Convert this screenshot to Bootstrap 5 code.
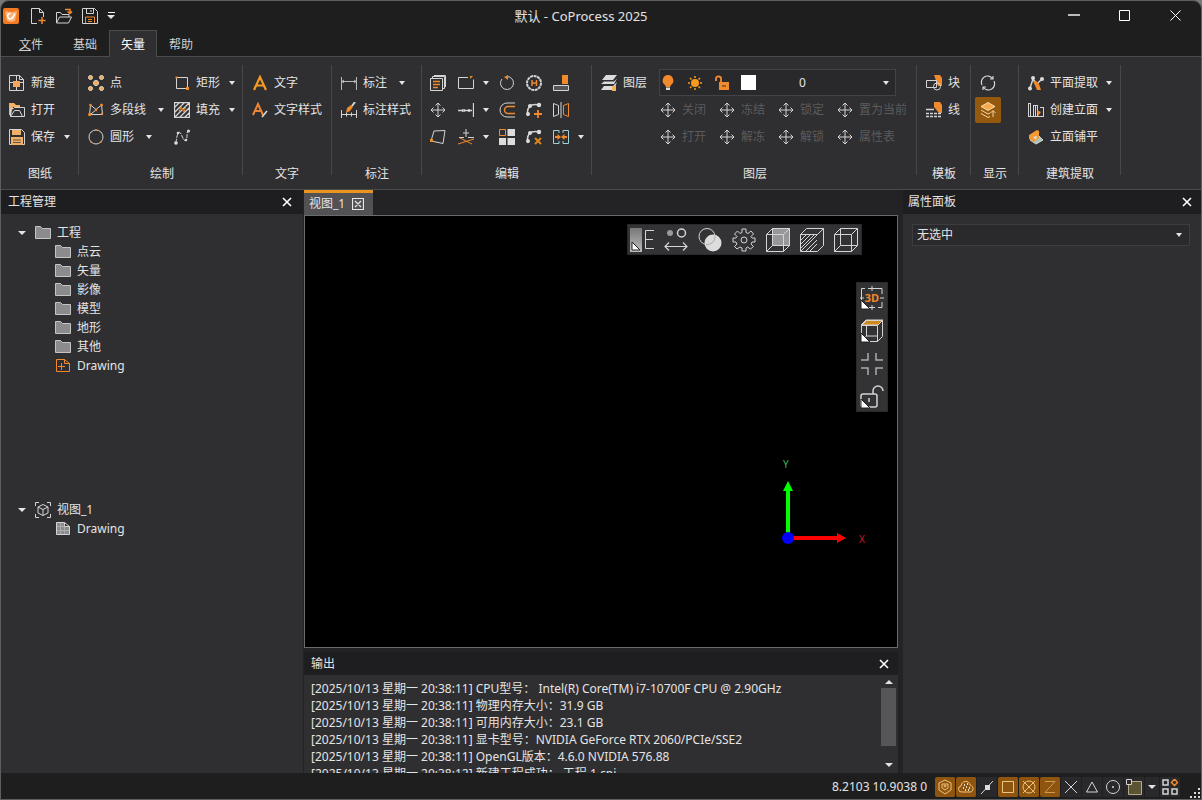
<!DOCTYPE html>
<html lang="zh-CN">
<head>
<meta charset="utf-8">
<meta name="viewport" content="width=device-width, initial-scale=1">
<title>默认 - CoProcess 2025</title>
<link rel="stylesheet" href="https://cdn.jsdelivr.net/npm/bootstrap@5.3.0/dist/css/bootstrap.min.css">
<style>
:root{--shell:#1e1e1e;--panel:#2f2e30;--head:#1e1d1f;--line:#4b4b4d;--ink:#e4e4e4;--orange:#f08a2c}
body{font-family:"Noto Sans","Noto Sans CJK SC",sans-serif;font-size:12px;line-height:18px;color:var(--ink);background:#77787a}
button,select{font:inherit;color:inherit;background:none;border:0;padding:0}
svg{display:block;flex:none;fill:none;stroke:#d4d4d4;stroke-width:1}
.o{stroke:var(--orange)} .of{fill:var(--orange);stroke:none} .wf{fill:#dcdcdc;stroke:none}
.i16{width:16px;height:16px}.i18{width:18px;height:18px}
.shell{border:1px solid #5d5e60;border-radius:9px 9px 0 0;background:var(--shell)}
.titlebar{height:29px}
.win-title{left:0;right:0;top:6px;padding-right:40px;font-size:13px;pointer-events:none}
.win-ctl button{width:51px;height:29px}
.quick{gap:8px;padding-left:2px}
.quick .logo{margin-right:2px}
.quick-menu{gap:2px}
.quick-menu span:first-child{width:7px}
.menubar{height:27px;padding-left:6px;border-bottom:1px solid var(--line)}
.menu-tab{height:27px;color:#cfcfcf;text-decoration:none;line-height:27px;width:48px;text-align:center;border:1px solid transparent;border-bottom:0}
.menu-tab.on{background:var(--panel);border-color:var(--line);color:#fff}
.menu-tab.file{margin-right:6px}
.ribbon{background:var(--panel);height:133px;border-bottom:1px solid var(--line);overflow:hidden}
.group{flex:none;padding:12px 9px 0 9px;background:linear-gradient(#47474a,#47474a) right 8px/1px 110px no-repeat}
.cells{display:grid;grid-auto-rows:27px;height:81px;justify-content:start}
.group h2{font-size:12px;line-height:18px;margin:15px 0 0;text-align:center;font-weight:400;white-space:nowrap}
.cell{display:flex;align-items:center;white-space:nowrap}
.tool{display:flex;align-items:center;gap:6px}
.drop{width:14px;height:18px;margin-left:8px;display:flex;align-items:center;justify-content:center}
.drop::before,.tri{content:"";border:4px solid transparent;border-top-color:#e4e4e4;border-bottom:0;width:0;height:0}
.drop::before{border-width:4px 3px 0}
.tri.up{border:4px solid transparent;border-bottom-color:#e4e4e4;border-top:0}
.g-file{padding-left:8px;padding-right:8px}
.g-draw{padding-right:7px}
.c-file{grid-template-columns:62px}
.c-draw{grid-template-columns:86px 62px}
.g-text{padding-right:10px}
.c-text{grid-template-columns:70px}
.c-dim{grid-template-columns:72px}
.c-edit{grid-template-columns:28px 41px 27px 27px 39px}
.c-edit .drop{margin-left:5px}
.g-edit{padding:12px 0 0 8px}
.g-edit h2{padding-right:8px}
.c-layer{grid-template-columns:59px 59px 59px 59px 72px}
.c-layer .tool:disabled{color:#5b5b5d}
.g-layer{padding-right:8px}
.c-tpl{grid-template-columns:36px}
.c-show{grid-template-columns:30px}
.c-arch{grid-template-columns:84px}
.g-tpl{min-width:54px}
.combo{grid-column:2/6;margin:0 13px 0 -1px;border:1px solid #434345;background:#29282a;display:flex;align-items:center;padding:0 6px 0 0}
.combo button{width:27px;height:25px;display:flex;align-items:center}
.combo select{flex:1;padding-left:43px;height:25px}
.swatch{width:15px;height:15px;background:#fff}
select{appearance:none;background:url("data:image/svg+xml,%3Csvg xmlns='http://www.w3.org/2000/svg' width='6' height='4'%3E%3Cpath d='M0 0h6L3 4z' fill='%23e4e4e4'/%3E%3C/svg%3E") right 0 center no-repeat}
.lit{width:26px;height:26px;background:#93590f;border-radius:2px;display:flex;align-items:center;justify-content:center;margin-left:-5px;flex:none}
.dock-l{width:302px}.dock-r{width:298px}
.dock-l,.dock-r,.out-body{background:var(--panel)}
.dock-head{height:24px;background:var(--head);padding:0 10px 0 7px;display:flex;align-items:center;justify-content:space-between;flex:none}
.dock-head h2{font-size:12px;line-height:18px;font-weight:400;margin:0}
.dock-l .dock-head{padding-right:11px}
.dock-r .dock-head{padding:0 9px 0 5px}
.tree{display:grid;grid-template-rows:1fr 1fr}
.tree>ul{list-style:none;margin:0;padding:9px 0 0 17px}
.tree>ul+ul{padding-top:7px}
.tree ul ul{list-style:none;margin:0;padding:0 0 0 37px}
.node{height:19px;display:flex;align-items:center;gap:6px}
.node .tri{margin-right:3px;flex:none}
.center{background:#232224;padding:0 5px 0 1px}
.center .dock-head{padding-right:9px;height:23px}
.doc-tab{background:#525154;border-top:3px solid #e8951f;height:25px;padding:0 9px 0 5px;gap:7px;white-space:nowrap}
.view{background:#000;border:1px solid #6a696c}
.vtools{background:#333234;border:1px solid #29282a}
.vt-h{top:8px;right:35px;height:31px;padding:0 3px 0 2px;gap:10px}
.vt-v{top:66px;right:9px;width:32px;height:130px;gap:9px}
.vtools svg{width:24px;height:24px}
.axes{right:30px;bottom:89px;width:90px;height:100px}
.output{height:121px;margin-top:4px}
.log{overflow:hidden;line-height:17px;padding:5px 0 0 7px;white-space:pre}
.sbar{width:15px;margin:5px 2px 6px 0}
.thumb{width:15px;height:58px;background:#565557;margin-bottom:14px}
.prop{margin:10px 11px 0 9px;height:22px;border:1px solid #3d3c3f;background-color:#2a292b;padding:0 4px;background-position:right 7px center}
.status{height:26px;padding-top:2px}
.status .sb{width:21px;height:20px;display:flex;align-items:center;justify-content:center;border-right:1px solid var(--shell);background:#29282a}
.status .sb.on{background:#8d5510;border-radius:2px}
.status .sb.on svg{stroke:#f1c27c}
.status .caret{width:15px}
.status .grip{margin-left:8px}
</style>
</head>
<body>
<svg width="0" height="0" class="position-absolute">
<symbol id="move" viewBox="0 0 16 16"><path d="M8 1v14M1 8h14M5.500 3.500 8 1l2.500 2.500M5.500 12.500 8 15l2.500-2.500M3.500 5.500 1 8l2.500 2.500M12.500 5.500 15 8l-2.500 2.500"/></symbol>
<symbol id="folder" viewBox="0 0 16 16"><path d="M.5 13.500v-12h5l2 2h8v10z" fill="#8b8a8c" stroke="#c4c4c4"/></symbol>
<symbol id="close" viewBox="0 0 10 10"><path d="m1 1 8 8M9 1 1 9" stroke="#fff" stroke-width="1.600"/></symbol>
<symbol id="cube" viewBox="0 0 24 24"><path d="M.5 6.500h17v17H.5zM.5 6.500l6-6h17v17l-6 6M17.500 6.500l6-6M6.500.5v17h17M.5 23.500l6-6"/></symbol>
<symbol id="corner" viewBox="0 0 24 24"><path d="M1 14v9h9z" fill="#fff" stroke="#222"/></symbol>
</svg>
<div class="shell vh-100 d-flex flex-column overflow-hidden">
<header>
<div class="titlebar position-relative d-flex align-items-center">
 <div class="quick d-flex align-items-center">
  <svg class="i16 logo" viewBox="0 0 16 16"><rect width="16" height="16" rx="2" fill="#f47a21" stroke="none"/><path d="m2 4 2-1 2 1h4l4-1-2 10-4 1-4-1z" fill="#fbb27a" stroke="none"/><path d="M7.500 5.500C3.500 5 4 11.500 7.500 11c3-.5 3-3.500 4.500-5.500" stroke="#fff" stroke-width="1.500"/></svg>
  <button aria-label="新建"><svg class="i18" viewBox="0 0 18 18"><path d="M8 16.500H2.500v-15h8l4 4V10M10.500 1.500v4h4"/><path class="o" stroke-width="1.500" d="M13 10v7M9.500 13.500h7"/></svg></button>
  <button aria-label="打开"><svg class="i18" viewBox="0 0 18 18"><path d="M1.500 16V5.500h4l1.500 2h7V10M1.500 16l3-6h12l-3 6z"/><path class="o" stroke-width="1.500" d="M10 2.500h5v4M12.500 4.500l2.500 2 2-2"/></svg></button>
  <button aria-label="保存"><svg class="i18" viewBox="0 0 18 18"><path d="M1.500 1.500h12l3 3v12h-15zM5.500 1.500v5h7v-5M10 3v2"/><path class="o" d="M4.500 16v-6h9v6M7 12.500h4M7 14.500h4"/></svg></button>
  <button aria-label="自定义快速访问工具栏" class="quick-menu d-flex flex-column align-items-center"><span class="border-top border-light"></span><span class="tri"></span></button>
 </div>
 <div class="win-title position-absolute text-center">默认 - CoProcess 2025</div>
 <div class="win-ctl ms-auto d-flex">
  <button aria-label="最小化"><svg class="m-auto" width="12" height="12"><path d="M0 5h12" stroke-width="2" stroke="#bbb"/></svg></button>
  <button aria-label="最大化"><svg class="m-auto" width="12" height="12"><path d="M.5.5h10v10H.5z" stroke="#fff"/></svg></button>
  <button aria-label="关闭窗口"><svg class="m-auto" width="12" height="12"><path d="m.5.5 10 10M10.500.5l-10 10" stroke="#fff"/></svg></button>
 </div>
</div>
<nav class="menubar d-flex">
 <a class="menu-tab file" href="#"><u>文</u>件</a><a class="menu-tab" href="#">基础</a><a class="menu-tab on" href="#">矢量</a><a class="menu-tab" href="#">帮助</a>
</nav>
</header>

<div class="ribbon d-flex">
<section class="group g-file"><div class="cells c-file">
 <div class="cell"><button class="tool"><svg class="i16" viewBox="0 0 16 16"><path d="M.5.5h10l4 4v11H.5zM.5 7.500h14M7.500 0v16M10.500.5v4h4"/><rect x="4" y="6" width="7" height="6" fill="#f3a55c" stroke="none"/></svg>新建</button></div>
 <div class="cell"><button class="tool"><svg class="i16" viewBox="0 0 16 16"><path fill="#f3b066" stroke="none" d="M0 1h5l2 2h4v2H4l-2 8H0z"/><path d="M1.500 14.500v-8h3l1-1h10v9zM1.500 14.500l4-6h5l3 6"/></svg>打开</button></div>
 <div class="cell"><button class="tool"><svg class="i16" viewBox="0 0 16 16"><path d="M.5.5h12l3 3v12H.5z"/><path fill="#f0b068" stroke="none" d="M3 1h9v5H3zM2 8h12v8H2z"/><path d="M4 11h8M4 13.500h8" stroke="#6a553a"/></svg>保存</button><button class="drop" aria-label="更多保存方式"></button></div>
</div><h2>图纸</h2></section>

<section class="group g-draw"><div class="cells c-draw">
 <div class="cell"><button class="tool"><svg class="i16" viewBox="0 0 16 16" style="fill:#f3a550;stroke:#e8dcc8"><circle cx="2.500" cy="2.500" r="2"/><circle cx="13.500" cy="2.500" r="2"/><circle cx="8" cy="8" r="2.500"/><circle cx="2.500" cy="13.500" r="2"/><circle cx="13.500" cy="13.500" r="2"/></svg>点</button></div>
 <div class="cell"><button class="tool"><svg class="i16" viewBox="0 0 16 16"><path d="M2.500 2.500h11v11h-11z"/><path class="of" d="M1.500 1.500h2v2h-2zM12 12h3v3h-3z"/></svg>矩形</button><button class="drop" aria-label="矩形选项"></button></div>
 <div class="cell"><button class="tool"><svg class="i16" viewBox="0 0 16 16"><path d="m1.500 13 1-10L8 7.500 13.500 3l1 9M1.500 13 8 8M3 12.500h10"/><g class="of"><circle cx="1.800" cy="12.500" r="1.800"/><circle cx="2.500" cy="3" r="1.300"/><circle cx="8" cy="8" r="1.300"/><circle cx="13.500" cy="3" r="1.500"/><circle cx="14" cy="12" r="1.300"/></g></svg>多段线</button><button class="drop" aria-label="多段线选项"></button></div>
 <div class="cell"><button class="tool"><svg class="i16" viewBox="0 0 16 16"><path d="M.5.5h15v15H.5zM0 6l6-6M0 11 11 0M0 16 16 0M5 16 16 5M10 16l6-6" stroke-width="1.300"/><path class="o" d="m5 10 2-5 3 5 2-6"/></svg>填充</button><button class="drop" aria-label="填充选项"></button></div>
 <div class="cell"><button class="tool"><svg class="i16" viewBox="0 0 16 16"><circle cx="8" cy="8" r="7"/><path class="of" d="M7 0h2v2H7zM2 12h2v2H2zM12 12h2v2h-2z" opacity=".6"/></svg>圆形</button><button class="drop" aria-label="圆形选项"></button></div>
 <div class="cell"><button class="tool" aria-label="样条曲线"><svg class="i16" viewBox="0 0 16 16"><path d="M2 14C3 4 5 1 7 5s3 8 5 6 0-6 2-9" stroke-dasharray="4 1"/><g class="wf"><circle cx="2" cy="14" r="1.800"/><circle cx="4" cy="4" r="1.300"/><circle cx="14.500" cy="2" r="1.500"/><circle cx="12" cy="11" r="1.300"/></g></svg></button></div>
</div><h2>绘制</h2></section>

<section class="group g-text"><div class="cells c-text">
 <div class="cell"><button class="tool"><svg class="i16" viewBox="0 0 16 16"><path d="M2 15 8 2l6 13M4 10.500h8" stroke="#f59a22" stroke-width="2.200"/></svg>文字</button></div>
 <div class="cell"><button class="tool"><svg class="i16" viewBox="0 0 16 16"><path d="M1 13 6 2l5 11M3 9h6" stroke="#ee8535" stroke-width="2"/><path d="m10 15 5-6" stroke="#ddd" stroke-width="1.500"/></svg>文字样式</button></div>
</div><h2>文字</h2></section>

<section class="group"><div class="cells c-dim">
 <div class="cell"><button class="tool"><svg class="i16" viewBox="0 0 16 16"><path d="M.5 2v13M15.500 2v13M1 6.500h14M3 5l-2 1.500L3 8M13 5l2 1.500L13 8" stroke="#b8b8b8"/></svg>标注</button><button class="drop" aria-label="标注选项"></button></div>
 <div class="cell"><button class="tool"><svg class="i16" viewBox="0 0 16 16"><path d="M.5 8v8M15.500 8v8M1 12.500h14M5.500 10.500v4M10.500 10.500v4"/><path class="of" d="m5 11 1-5 4-3 2 2-3 4z"/><path d="m11 4 3-4" stroke-width="2"/></svg>标注样式</button></div>
</div><h2>标注</h2></section>

<section class="group g-edit"><div class="cells c-edit">
 <div class="cell"><button aria-label="复制"><svg class="i16" viewBox="0 0 16 16"><path d="M.5 3.500h12v12H.5zM2.500 3V1.500h12v12H13M4 .5h11.500V12"/><path class="o" d="M3 6.500h7M3 9.500h7M3 12.500h5" stroke-width="1.500"/></svg></button></div>
 <div class="cell"><button aria-label="拉伸"><svg class="i16" viewBox="0 0 16 16"><path d="M10 2.500H.5v11h15v-9"/><path class="of" d="M12 4V1h3z"/></svg></button><button class="drop" aria-label="拉伸选项"></button></div>
 <div class="cell"><button aria-label="旋转"><svg class="i16" viewBox="0 0 16 16"><path d="M8 1.500a6.500 6.500 0 1 1-6.500 7A7 7 0 0 1 3 4"/><path class="of" d="m5 2 4-2v5z"/></svg></button></div>
 <div class="cell"><button aria-label="填充编辑"><svg class="i16" viewBox="0 0 16 16"><circle cx="8" cy="8" r="7" stroke-width="2" stroke-dasharray="3 .6"/><path class="o" d="M6 5v6M10.500 5v6M6 8h4" stroke-width="1.500"/></svg></button></div>
 <div class="cell"><button aria-label="对齐"><svg class="i16" viewBox="0 0 16 16"><path class="of" d="M9 0h6v9H9z"/><path d="M.5 10.500h15v5H.5z" fill="#555"/></svg></button></div>
 <div class="cell"><button aria-label="移动"><svg class="i16"><use href="#move"/></svg></button></div>
 <div class="cell"><button aria-label="延伸"><svg class="i16" viewBox="0 0 16 16"><path d="M0 8.500h5M6 8.500h8M15.500 1v14" stroke-width="1.300"/><path class="wf" d="M4 7h3v3H4zM10 7h2v3h-2z" opacity=".7"/></svg></button><button class="drop" aria-label="延伸选项"></button></div>
 <div class="cell"><button aria-label="偏移"><svg class="i16" viewBox="0 0 16 16"><path d="M16 1H8a7 7 0 0 0 0 14h8"/><path class="o" stroke-width="1.500" d="M16 4.500H9a3.500 3.500 0 0 0 0 7h7"/></svg></button></div>
 <div class="cell"><button aria-label="添加节点"><svg class="i16" viewBox="0 0 16 16"><path d="M2 14C0 6 4 1 13 3" stroke-width="1.500"/><g class="wf"><circle cx="2" cy="12" r="2"/><circle cx="4" cy="4" r="2"/><circle cx="13" cy="3" r="2.200"/></g><path class="o" stroke-width="1.800" d="M12 8v8M8 12h8"/></svg></button></div>
 <div class="cell"><button aria-label="镜像"><svg class="i16" viewBox="0 0 16 16"><path d="m.5 1.500 5 2v9l-5 2zM8 0v16"/><path class="o" d="m15.500 1.500-5 2v9l5 2z"/></svg></button></div>
 <div class="cell"><button aria-label="变形"><svg class="i16" viewBox="0 0 16 16"><path d="m4 2 11-.5-2 13L1 12z"/><path class="of" d="M0 10h3v3H0z"/></svg></button></div>
 <div class="cell"><button aria-label="修剪"><svg class="i16" viewBox="0 0 16 16"><path d="M8 0v8M5 4h6M1 8.500h5M10 8.500h6"/><path class="o" d="m0 15 16-5M2 9l12 6"/></svg></button><button class="drop" aria-label="修剪选项"></button></div>
 <div class="cell"><button aria-label="阵列"><svg class="i16" viewBox="0 0 16 16"><path class="wf" d="M8.500 0H16v7H8.500zM0 9h7v7H0zM8.500 9H16v7H8.500z"/><path class="o" d="M.5.5h6v6h-6z"/></svg></button></div>
 <div class="cell"><button aria-label="删除节点"><svg class="i16" viewBox="0 0 16 16"><path d="M2 14C0 6 4 1 13 3" stroke-width="1.500"/><g class="wf"><circle cx="2" cy="12" r="2"/><circle cx="4" cy="4" r="2"/><circle cx="13" cy="3" r="2.200"/></g><path d="m9 9 6 6M15 9l-6 6" stroke="#d9861f" stroke-width="2"/></svg></button></div>
 <div class="cell"><button aria-label="打断"><svg class="i16" viewBox="0 0 16 16"><path d="M6 4V1.500H.5v13H6V12M10 4V1.500h5.500v13H10V12" stroke="#9fd3da"/><path class="of" d="M8 8 4.500 5v2H2v2h2.500v2zM8 8l3.500-3v2H14v2h-2.500v2z"/></svg></button><button class="drop" aria-label="打断选项"></button></div>
</div><h2>编辑</h2></section>

<section class="group g-layer"><div class="cells c-layer">
 <div class="cell"><button class="tool"><svg class="i16" viewBox="0 0 16 16"><path class="wf" d="M5 0h11l-4 5H1zM3 6.500h10l3-3-3 5.500H0zM3 11h9l4-4-3 8H0z"/><path fill="#f3b35c" stroke="none" d="M11 11h4v5h-4z"/></svg>图层</button></div>
 <div class="combo"><button aria-label="图层开关"><svg class="i16" viewBox="0 0 16 16"><path class="of" d="M8 0a5.500 5.500 0 0 0-3 10l1 2h4l1-2A5.500 5.500 0 0 0 8 0z"/><path class="wf" d="M6 12.500h4V15H6z"/></svg></button><button aria-label="图层冻结"><svg class="i16" viewBox="0 0 16 16"><circle cx="8" cy="8" r="4" fill="#f79a1e" stroke="none"/><path stroke="#f79a1e" stroke-width="1.500" d="M8 1v2M8 13v2M1 8h2M13 8h2M3 3l1.500 1.500M11.500 11.500 13 13M13 3l-1.500 1.500M4.500 11.500 3 13"/></svg></button><button aria-label="图层锁定"><svg class="i16" viewBox="0 0 16 16"><path class="of" d="M5 7h10v8H5z"/><path class="o" stroke-width="1.800" d="M7 7V4.500a2.500 2.500 0 0 0-5-1V6"/><path d="M8 11h4" stroke="#333"/></svg></button><span class="swatch"></span><select aria-label="当前图层"><option>0</option></select></div>
 <div></div>
 <div class="cell"><button class="tool" disabled><svg class="i16"><use href="#move"/></svg>关闭</button></div>
 <div class="cell"><button class="tool" disabled><svg class="i16"><use href="#move"/></svg>冻结</button></div>
 <div class="cell"><button class="tool" disabled><svg class="i16"><use href="#move"/></svg>锁定</button></div>
 <div class="cell"><button class="tool" disabled><svg class="i16"><use href="#move"/></svg>置为当前</button></div>
 <div></div>
 <div class="cell"><button class="tool" disabled><svg class="i16"><use href="#move"/></svg>打开</button></div>
 <div class="cell"><button class="tool" disabled><svg class="i16"><use href="#move"/></svg>解冻</button></div>
 <div class="cell"><button class="tool" disabled><svg class="i16"><use href="#move"/></svg>解锁</button></div>
 <div class="cell"><button class="tool" disabled><svg class="i16"><use href="#move"/></svg>属性表</button></div>
</div><h2>图层</h2></section>

<section class="group g-tpl"><div class="cells c-tpl">
 <div class="cell"><button class="tool"><svg class="i16" viewBox="0 0 16 16"><path class="of" d="M8 0h6l2 3v8h-4z"/><path d="M.5 5.500h10v7H.5z"/><circle cx="11" cy="11.500" r="3.500"/></svg>块</button></div>
 <div class="cell"><button class="tool"><svg class="i16" viewBox="0 0 16 16"><path class="of" d="M8 0h6l2 3v8h-3L8 5z"/><path d="M0 7.500h8" stroke-width="1.500"/><path d="M0 11.500h16M0 14.500h16" stroke-dasharray="3 1" stroke-width="1.500"/></svg>线</button></div>
</div><h2>模板</h2></section>

<section class="group"><div class="cells c-show">
 <div class="cell"><button aria-label="刷新"><svg class="i16" viewBox="0 0 16 16"><path d="M2 10a6.200 6.200 0 0 1 10.500-6.500M14 6a6.200 6.200 0 0 1-10.500 6.500M13 1v3h-3M3 15v-3h3" stroke-width="1.200"/></svg></button></div>
 <div class="cell"><button class="lit" aria-label="图层显示"><svg class="i16" viewBox="0 0 16 16"><path d="m8 .5 7 4-7 4-7-4z" fill="#f5ab4b" stroke="#f9dcae"/><path d="m1 8 7 4 2-1M1 11.500l7 4 2-1M13 15V9M10.500 11 13 8.500l2.500 2.500" stroke="#f3d6a8"/></svg></button></div>
</div><h2>显示</h2></section>

<section class="group"><div class="cells c-arch">
 <div class="cell"><button class="tool"><svg class="i16" viewBox="0 0 16 16"><path d="m2 13 3-9 4 5 5-5" stroke-width="1.500"/><path class="of" d="M5 6h3l3 3 2 6H9z"/><g class="wf"><circle cx="2" cy="13.500" r="2"/><circle cx="5" cy="3" r="2"/><circle cx="14" cy="4" r="2"/></g></svg>平面提取</button><button class="drop" aria-label="平面提取选项"></button></div>
 <div class="cell"><button class="tool"><svg class="i16" viewBox="0 0 16 16"><path d="M.5 1v14M2.500 1v14M5.500 3v12M7.500 3v12M0 1.500h3M5 3.500h4M9.500 3v12M0 14.500h16M15.500 6v9M12 5.500h4"/><path class="of" d="m9 8 4 2-3 4z"/></svg>创建立面</button><button class="drop" aria-label="创建立面选项"></button></div>
 <div class="cell"><button class="tool"><svg class="i16" viewBox="0 0 16 16"><path d="m2 11 6 4 7-4-4-4z" fill="#a8c4bd"/><path d="m1 6 8-5 2 1v7l-5 4-5-3z" fill="#f39a35" stroke="none"/><path class="wf" d="m5 8 4-1-1 4z"/></svg>立面铺平</button></div>
</div><h2>建筑提取</h2></section>
</div>

<main class="d-flex flex-grow-1" style="min-height:0">
<aside class="dock-l d-flex flex-column flex-shrink-0">
 <div class="dock-head"><h2>工程管理</h2><button aria-label="关闭工程管理"><svg width="10" height="10"><use href="#close"/></svg></button></div>
 <div class="tree flex-grow-1">
  <ul><li><div class="node"><span class="tri"></span><svg class="i16"><use href="#folder"/></svg>工程</div>
   <ul>
    <li class="node"><svg class="i16"><use href="#folder"/></svg>点云</li>
    <li class="node"><svg class="i16"><use href="#folder"/></svg>矢量</li>
    <li class="node"><svg class="i16"><use href="#folder"/></svg>影像</li>
    <li class="node"><svg class="i16"><use href="#folder"/></svg>模型</li>
    <li class="node"><svg class="i16"><use href="#folder"/></svg>地形</li>
    <li class="node"><svg class="i16"><use href="#folder"/></svg>其他</li>
    <li class="node"><svg class="i16" viewBox="0 0 16 16"><path class="o" d="M1.500 1.500h8l5 4v8h-13zM9.500 1.500v4h5M6.500 5v7M3 8.500h7"/></svg>Drawing</li>
   </ul></li></ul>
  <ul><li><div class="node"><span class="tri"></span><svg class="i16" viewBox="0 0 16 16"><path d="M.5 4V.5H4M12 .5h3.500V4M15.500 12v3.500H12M4 15.500H.5V12M8 2.500l5 2.500v6l-5 2.500L3 11V5zM3 5l5 2.500L13 5M8 7.500v6"/></svg>视图_1</div>
   <ul><li class="node"><svg class="i16" viewBox="0 0 16 16"><path fill="#8b8a8c" d="M1.500 1.500h8l5 4v8h-13zM9.500 1.500v4h5"/><path stroke="#aaa" d="M5.500 2v11M2 5.500h7M2 9.500h12M9.500 6v7"/></svg>Drawing</li></ul></li></ul>
 </div>
</aside>

<section class="center d-flex flex-column flex-grow-1" style="min-width:0">
 <div class="d-flex"><div class="doc-tab d-flex align-items-center">视图_1<button aria-label="关闭视图"><svg width="12" height="12" viewBox="0 0 12 12"><path d="M.5.5h11v11H.5zM3 3l6 6M9 3 3 9" stroke="#e8e8e8" stroke-width="1.200"/></svg></button></div></div>
 <div class="view position-relative flex-grow-1">
  <div class="vtools vt-h position-absolute d-flex align-items-center">
   <svg viewBox="0 0 24 24"><defs><linearGradient id="fade" x2="0" y2="1"><stop stop-color="#777"/><stop offset="1" stop-color="#bbb"/></linearGradient></defs><path d="M0 0h12v24H0z" fill="url(#fade)" stroke="none"/><path d="M24 2.500h-8.500v18H24M16 11.500h7"/><path d="M2 14v8h8z" fill="#fff" stroke="#222"/></svg>
   <svg viewBox="0 0 24 24"><circle cx="6" cy="5" r="3" fill="#999" stroke="none"/><circle cx="17.500" cy="5" r="4" stroke-width="1.500"/><path d="M1 18.500h22M5 14.500l-4 4 4 4M19 14.500l4 4-4 4" stroke-width="1.200"/></svg>
   <svg viewBox="0 0 24 24"><circle cx="9" cy="8.500" r="8"/><circle cx="15" cy="15" r="8.500" class="wf"/><path d="M8 16.500a8 8 0 0 0 9-9" stroke="#aaa"/></svg>
   <svg viewBox="0 0 24 24"><circle cx="12" cy="12" r="3"/><path d="M10 1h4v3.500l2 1 3-2.500 2.500 3-2.500 2.500 1 1.500h3v4h-3l-1 2 2.500 2.500-3 2.500-3-2-1.500 1v3h-4v-3l-2-1-3 2-2.500-2.500 2.500-2.500-1-2H1v-4h3l1-1.500L2.500 6l3-3 2.500 2.500 2-1z"/></svg>
   <svg viewBox="0 0 24 24"><path d="M6.500.5h17v17h-17z" fill="#979699"/><use href="#cube"/></svg>
   <svg viewBox="0 0 24 24"><path d="M.5 6.500l6-6h17v17l-6 6H.5zM.5 6.500h17l6-6M1 12l5-5M1 16l9-9M1 20 14 7M1 23 17 7M6 23l11-11M10 23l7-7"/></svg>
   <svg viewBox="0 0 24 24"><use href="#cube"/></svg>
  </div>
  <div class="vtools vt-v position-absolute d-flex flex-column align-items-center justify-content-center">
   <svg viewBox="0 0 24 24"><path d="M5 2.500H1.500V20M8 2.500h14V8M22 16v5.500h-4M8 21.500h7M12 0v5M12 19v5M0 12h4M20 12h4"/><text x="12" y="16" text-anchor="middle" font-size="11" font-weight="700" fill="#f08a2c" stroke="none">3D</text><use href="#corner"/></svg>
   <svg viewBox="0 0 24 24"><path d="m1 6 5-5h17l-5 5z" fill="#d08a1c"/><path d="M1.500 6.500h16v16h-16zM1.500 6.500l5-5h16v16l-5 5M17.500 6.500l5-5M6.500 7v10h11M6.500 17l-5 5"/><use href="#corner"/></svg>
   <svg viewBox="0 0 24 24"><path d="M8 1v7H1M16 1v7h7M8 23v-7H1M16 23v-7h7" stroke-width="1.500" stroke="#aaa"/></svg>
   <svg viewBox="0 0 24 24"><rect x="1" y="9" width="16" height="13" rx="2" stroke-width="1.500"/><path d="M13 9V6a5 5 0 0 1 10 0M9 13v4" stroke-width="1.500"/><use href="#corner"/></svg>
  </div>
  <svg class="axes position-absolute" viewBox="0 0 90 100"><g stroke="none"><path d="M9 36h4v40H9zM6 33l5-10 5 10zM9 30h4v10H9z" fill="#0f0"/><path d="M10 78h50v4H10zM60 75l9 5-9 5z" fill="#f00"/><circle cx="11" cy="80" r="6" fill="#00f"/><text x="6" y="10" font-size="10" fill="#3fae5a">Y</text><text x="82" y="85" font-size="10" fill="#d0182c">X</text></g></svg>
 </div>
 <div class="output d-flex flex-column flex-shrink-0">
  <div class="dock-head"><h2>输出</h2><button aria-label="关闭输出"><svg width="10" height="10"><use href="#close"/></svg></button></div>
  <div class="out-body d-flex flex-grow-1" style="min-height:0">
   <div class="log flex-grow-1">[2025/10/13 星期一 20:38:11] CPU型号： Intel(R) Core(TM) i7-10700F CPU @ 2.90GHz
[2025/10/13 星期一 20:38:11] 物理内存大小：31.9 GB
[2025/10/13 星期一 20:38:11] 可用内存大小：23.1 GB
[2025/10/13 星期一 20:38:11] 显卡型号：NVIDIA GeForce RTX 2060/PCIe/SSE2
[2025/10/13 星期一 20:38:11] OpenGL版本：4.6.0 NVIDIA 576.88
[2025/10/13 星期一 20:38:12] 新建工程成功： 工程 1.cpi</div>
   <div class="sbar d-flex flex-column align-items-center justify-content-between"><span class="tri up"></span><span class="thumb"></span><span class="tri"></span></div>
  </div>
 </div>
</section>

<aside class="dock-r flex-shrink-0 d-flex flex-column">
 <div class="dock-head"><h2>属性面板</h2><button aria-label="关闭属性面板"><svg width="10" height="10"><use href="#close"/></svg></button></div>
 <select class="prop" aria-label="选中对象"><option>无选中</option></select>
</aside>
</main>

<footer class="status d-flex align-items-center justify-content-end flex-shrink-0">
 <span class="me-2">8.2103 10.9038 0</span>
 <button class="sb on" aria-label="三维捕捉"><svg class="i16" viewBox="0 0 16 16"><path d="m8 1 6 3v7l-6 4-6-4V4zM5 5h6v4l-3 2-3-2z"/><circle cx="8" cy="7" r="1"/></svg></button>
 <button class="sb on" aria-label="点云捕捉"><svg class="i16" viewBox="0 0 16 16"><path d="M4 13a3 3 0 0 1-1-6c1-6 8-6 9-1 4 1 4 7 0 7z"/><path d="M6 6h1M9 5h1M5 9h1M8 8h1M11 9h1M7 11h1M10 11h1" stroke="#fff" stroke-width="1.500"/></svg></button>
 <button class="sb" aria-label="最近点"><svg class="i16" viewBox="0 0 16 16"><path d="M2 15 14 2"/><path class="wf" d="M6 6h5v5H6z"/></svg></button>
 <button class="sb on" aria-label="端点"><svg class="i16" viewBox="0 0 16 16"><path d="M2.500 2.500h11v11h-11z"/></svg></button>
 <button class="sb on" aria-label="节点"><svg class="i16" viewBox="0 0 16 16"><circle cx="8" cy="8" r="6"/><path d="m2 2 12 12M14 2 2 14"/></svg></button>
 <button class="sb on" aria-label="中点线"><svg class="i16" viewBox="0 0 16 16"><path d="M3 2.500h10l-10 11h10" stroke="#d09a50"/></svg></button>
 <button class="sb" aria-label="交点"><svg class="i16" viewBox="0 0 16 16"><path d="m2 2 12 12M14 2 2 14"/></svg></button>
 <button class="sb" aria-label="中点"><svg class="i16" viewBox="0 0 16 16"><path d="m8 3 5.500 10h-11z"/></svg></button>
 <button class="sb" aria-label="圆心"><svg class="i16" viewBox="0 0 16 16"><circle cx="8" cy="8" r="6.500"/><circle cx="8" cy="8" r="1" class="wf"/></svg></button>
 <button class="sb" aria-label="选择框"><svg class="i16" viewBox="0 0 16 16"><path d="M2.500 2.500h13v13h-13z" fill="#5a5334" stroke="#b5a988"/><path d="M.5.5h5v5h-5z" fill="#29282a"/></svg></button>
 <button class="sb caret" aria-label="更多捕捉"><span class="tri"></span></button>
 <button class="sb" aria-label="布局"><svg class="i16" viewBox="0 0 16 16"><path d="M1 1h5v5H1zM1 10h5v5H1zM10 10h5v5h-5z" stroke-width="1.500"/><path class="o" stroke-width="1.500" d="m12.500 0 3 3.500-3 3-3-3z"/></svg></button>
 <svg class="grip align-self-end" width="12" height="12" viewBox="0 0 12 12"><path class="wf" d="M9 1h2v2H9zM5 5h2v2H5zM9 5h2v2H9zM1 9h2v2H1zM5 9h2v2H5zM9 9h2v2H9z"/></svg>
</footer>
</div>
<script src="https://cdn.jsdelivr.net/npm/bootstrap@5.3.0/dist/js/bootstrap.bundle.min.js"></script>
</body>
</html>
